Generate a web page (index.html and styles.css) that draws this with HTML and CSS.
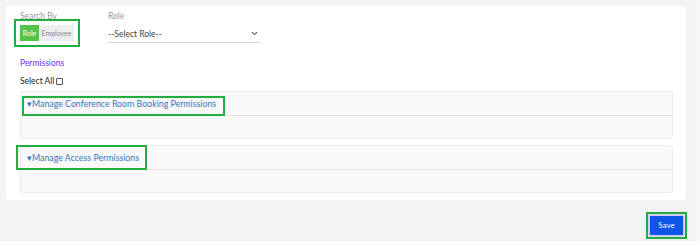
FILE: index.html
```html
<!DOCTYPE html>
<html lang="en">
<head>
    <meta charset="UTF-8">
    <meta name="viewport" content="width=device-width, initial-scale=1.0">
    <title>Role Permissions</title>
    <link rel="stylesheet" href="styles.css">
</head>
<body>
    <div class="page">
        <div class="main">
            <div class="card">
                <div class="filters">
                    <div class="field field-search">
                        <span class="field-label">Search By</span>
                        <div class="toggle">
                            <button class="toggle-btn active">Role</button>
                            <button class="toggle-btn">Employee</button>
                        </div>
                    </div>
                    <div class="field field-role">
                        <span class="field-label">Role</span>
                        <div class="select">
                            <span>--Select Role--</span>
                            <svg class="chevron" width="7" height="5" viewBox="0 0 7 5"><path d="M1 1.2 L3.5 3.6 L6 1.2" fill="none" stroke="#555" stroke-width="1.1"/></svg>
                        </div>
                    </div>
                </div>

                <div class="perm-title">Permissions</div>
                <label class="select-all">Select All<span class="checkbox"></span></label>

                <div class="panel">
                    <div class="panel-head">
                        <a class="panel-link">&#9662;Manage Conference Room Booking Permissions</a>
                    </div>
                    <div class="panel-body"></div>
                    <span class="mark mark-conf"></span>
                </div>
                <div class="panel">
                    <div class="panel-head">
                        <a class="panel-link">&#9662;Manage Access Permissions</a>
                    </div>
                    <div class="panel-body"></div>
                    <span class="mark mark-access"></span>
                </div>
            </div>
            <div class="footer">
                <button class="save">Save</button>
            </div>
        </div>
        <div class="scroll-strip"></div>
    </div>
    <div class="bottom-strip"></div>
</body>
</html>
```

FILE: styles.css
```css
*{
    box-sizing: border-box;
    font-family: Lato, "Open Sans", Arial, sans-serif;
}
body{
    margin: 0;
    background-color: #ffffff;
}
.page{
    display: flex;
    height: 241px;
    background-color: #f3f3f3;
}
.main{
    flex: 1;
    padding: 6px 10px 0 6px;
}
.scroll-strip{
    width: 4px;
    background-color: #f7f7f7;
}
.bottom-strip{
    height: 6px;
    background-color: #ffffff;
}

.card{
    background-color: #ffffff;
    border-radius: 3px;
    height: 194px;
    padding: 5px 13px 0 14px;
}

.filters{
    display: flex;
    gap: 34px;
}
.field{
    display: flex;
    flex-direction: column;
}
.field-search{
    width: 54px;
}
.field-label{
    font-size: 8.5px;
    line-height: 11px;
    color: #9a9a9a;
    white-space: nowrap;
}

.toggle{
    display: flex;
    margin-top: 3px;
    outline: 2px solid #22ad3f;
    outline-offset: 4px;
    width: 54px;
}
.toggle-btn{
    all: unset;
    height: 16px;
    line-height: 16px;
    font-size: 7px;
    text-align: center;
    width: 35px;
    background-color: #eceef0;
    color: #8a8a8a;
}
.toggle-btn.active{
    width: 19px;
    background-color: #55c44f;
    color: #ffffff;
}

.select{
    margin-top: 3px;
    width: 152px;
    height: 18px;
    border-bottom: 1px solid #d4d4d4;
    display: flex;
    align-items: center;
    justify-content: space-between;
    padding-right: 2px;
    font-size: 8.5px;
    color: #444;
}

.perm-title{
    margin-top: 15px;
    font-size: 8.5px;
    line-height: 11px;
    color: #6a2cf0;
}
.select-all{
    display: flex;
    align-items: center;
    gap: 2px;
    margin-top: 7px;
    font-size: 8.5px;
    line-height: 11px;
    color: #222;
}
.checkbox{
    width: 7px;
    height: 7px;
    border: 1px solid #555;
    border-radius: 1px;
    background-color: #fff;
}

.panel{
    position: relative;
    margin-top: 4px;
    border: 1px solid #ececec;
    border-radius: 3px;
    background-color: #f9f9f9;
}
.panel + .panel{
    margin-top: 6px;
}
.panel-head{
    height: 24px;
    border-bottom: 1px solid #e3e3e3;
    padding-left: 6px;
    display: flex;
    align-items: center;
}
.panel-link{
    font-size: 8.8px;
    color: #3478bd;
    cursor: pointer;
}
.panel-body{
    height: 22px;
}

/* green highlight boxes drawn over the headers */
.mark{
    position: absolute;
    border: 2px solid #22ad3f;
}
.mark-conf{
    left: 1px;
    top: 4px;
    width: 203px;
    height: 20px;
}
.mark-access{
    left: -5px;
    top: -1px;
    width: 131px;
    height: 25px;
}

.footer{
    display: flex;
    justify-content: flex-end;
    padding-top: 16px;
    padding-right: 3px;
}
.save{
    all: unset;
    width: 33px;
    height: 19px;
    line-height: 19px;
    text-align: center;
    font-size: 8px;
    color: #ffffff;
    background-color: #0b56e6;
    box-shadow: 0 0 3px 2px rgba(120, 96, 255, 0.35);
    outline: 2px solid #22ad3f;
    outline-offset: 2px;
}
```
